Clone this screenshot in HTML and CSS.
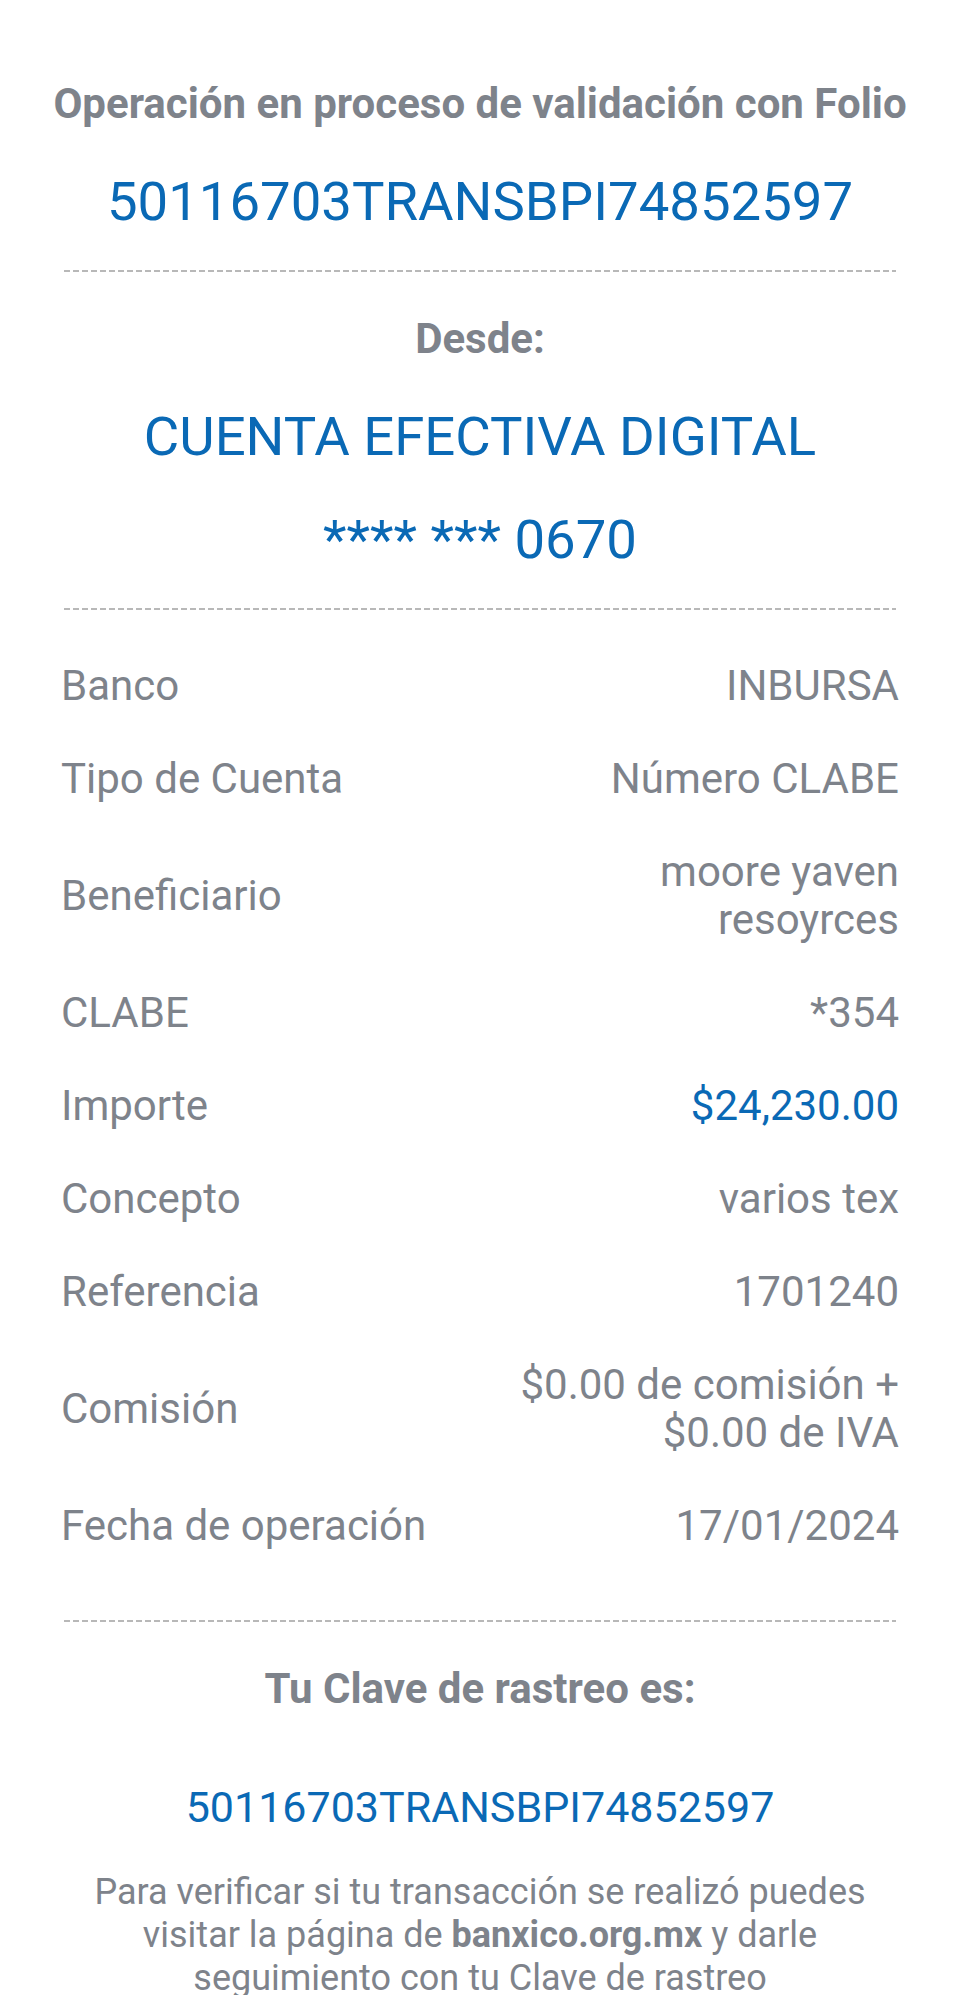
FILE: index.html
```html
<!DOCTYPE html>
<html lang="es">
<head>
    <meta charset="UTF-8">
    <title>Comprobante de transferencia</title>
    <link rel="stylesheet" href="styles.css">
</head>
<body>
    <div class="receipt">
        <section class="block block-top">
            <h1 class="title">Operación en proceso de validación con Folio</h1>
            <div class="folio">50116703TRANSBPI74852597</div>
        </section>

        <div class="dash"></div>

        <section class="block">
            <h2 class="title">Desde:</h2>
            <div class="account">CUENTA EFECTIVA DIGITAL</div>
            <div class="account">**** *** 0670</div>
        </section>

        <div class="dash"></div>

        <div class="details">
            <div class="row">
                <span class="label">Banco</span>
                <span class="value">INBURSA</span>
            </div>
            <div class="row">
                <span class="label">Tipo de Cuenta</span>
                <span class="value">Número CLABE</span>
            </div>
            <div class="row">
                <span class="label">Beneficiario</span>
                <span class="value">moore yaven resoyrces</span>
            </div>
            <div class="row">
                <span class="label">CLABE</span>
                <span class="value">*354</span>
            </div>
            <div class="row">
                <span class="label">Importe</span>
                <span class="value amount">$24,230.00</span>
            </div>
            <div class="row">
                <span class="label">Concepto</span>
                <span class="value">varios tex</span>
            </div>
            <div class="row">
                <span class="label">Referencia</span>
                <span class="value">1701240</span>
            </div>
            <div class="row">
                <span class="label">Comisión</span>
                <span class="value">$0.00 de comisión + $0.00 de IVA</span>
            </div>
            <div class="row">
                <span class="label">Fecha de operación</span>
                <span class="value">17/01/2024</span>
            </div>
        </div>

        <div class="dash"></div>

        <section class="block block-bottom">
            <h2 class="title">Tu Clave de rastreo es:</h2>
            <div class="tracking">50116703TRANSBPI74852597</div>
            <p class="note">Para verificar si tu transacción se realizó puedes visitar la página de <b>banxico.org.mx</b> y darle seguimiento con tu Clave de rastreo</p>
        </section>
    </div>
</body>
</html>
```

FILE: styles.css
```css
body {
    margin: 0;
    background: #ffffff;
    font-family: Roboto, 'Noto Sans', sans-serif;
    color: #7e838b;
}
.receipt {
    padding: 80px 61px 0;
}
.block {
    display: flex;
    flex-direction: column;
    align-items: center;
    gap: 43px;
    text-align: center;
}
.block-top {
    margin: 0 -40px;
}
.title {
    margin: 0;
    font-size: 42px;
    line-height: 48px;
    font-weight: 700;
    color: #7e838b;
}
.folio, .account {
    font-size: 54.5px;
    line-height: 60px;
    color: #0a69b5;
}
.dash {
    height: 2px;
    margin: 0 3px;
    background: repeating-linear-gradient(90deg, #b8b8b8 0, #b8b8b8 6px, transparent 6px, transparent 9px);
}
.block + .dash {
    margin-top: 39px;
}
.dash + .block {
    margin-top: 43px;
}
.details {
    padding: 29px 0 48px;
}
.row {
    display: grid;
    grid-template-columns: 1fr 1fr;
    align-items: center;
    padding: 22.5px 0;
    font-size: 42px;
    line-height: 48px;
}
.value {
    text-align: right;
}
.amount {
    color: #0a69b5;
}
.block-bottom {
    gap: 0;
}
.tracking {
    margin-top: 70px;
    font-size: 43px;
    line-height: 48px;
    color: #0a69b5;
}
.note {
    margin: 40px 0 0;
    font-size: 36px;
    line-height: 43px;
}
.note b {
    font-weight: 700;
}
```
